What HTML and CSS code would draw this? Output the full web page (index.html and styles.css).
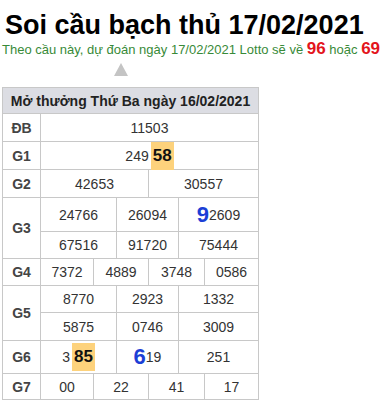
FILE: index.html
```html
<!DOCTYPE html>
<html lang="vi">
<head>
<meta charset="utf-8">
<link rel="stylesheet" href="styles.css">
</head>
<body>
<h1 class="title">Soi cầu bạch thủ 17/02/2021</h1>
<p class="subtitle">Theo cầu này, dự đoán ngày 17/02/2021 Lotto sẽ về <b class="red">96</b> hoặc <b class="red">69</b></p>
<div class="caret"></div>
<div class="results">
  <div class="head span-all">Mở thưởng Thứ Ba ngày 16/02/2021</div>

  <div class="lbl">ĐB</div>
  <div class="cell s2-8">11503</div>

  <div class="lbl">G1</div>
  <div class="cell s2-8">249<span class="hl">58</span></div>

  <div class="lbl">G2</div>
  <div class="cell s2-5">42653</div>
  <div class="cell s5-8">30557</div>

  <div class="lbl rs2">G3</div>
  <div class="cell s2-4">24766</div>
  <div class="cell s4-6">26094</div>
  <div class="cell s6-8"><span class="big">9</span>2609</div>
  <div class="cell s2-4">67516</div>
  <div class="cell s4-6">91720</div>
  <div class="cell s6-8">75444</div>

  <div class="lbl">G4</div>
  <div class="cell s2-3">7372</div>
  <div class="cell s3-5">4889</div>
  <div class="cell s5-7">3748</div>
  <div class="cell s7-8">0586</div>

  <div class="lbl rs2">G5</div>
  <div class="cell s2-4">8770</div>
  <div class="cell s4-6">2923</div>
  <div class="cell s6-8">1332</div>
  <div class="cell s2-4">5875</div>
  <div class="cell s4-6">0746</div>
  <div class="cell s6-8">3009</div>

  <div class="lbl">G6</div>
  <div class="cell s2-4">3<span class="hl">85</span></div>
  <div class="cell s4-6"><span class="big">6</span>19</div>
  <div class="cell s6-8">251</div>

  <div class="lbl">G7</div>
  <div class="cell s2-3">00</div>
  <div class="cell s3-5">22</div>
  <div class="cell s5-7">41</div>
  <div class="cell s7-8">17</div>
</div>
</body>
</html>
```
FILE: styles.css
```css
html, body {
  margin: 0;
  padding: 0;
  background: #fff;
}
body {
  padding: 0 2px;
  font-family: "Liberation Sans", Arial, sans-serif;
}
.title {
  margin: 0;
  padding: 10px 0 0 3px;
  font-size: 27px;
  line-height: 30px;
  font-weight: bold;
  color: #000;
}
.subtitle {
  margin: 0;
  font-size: 13px;
  line-height: 18px;
  color: #388a38;
  white-space: nowrap;
}
.red {
  color: #e3141c;
  font-size: 17px;
}
.caret {
  width: 0;
  height: 0;
  margin: 4px 0 11px 112px;
  border-left: 7px solid transparent;
  border-right: 7px solid transparent;
  border-bottom: 13px solid #c4c4c4;
}
.results {
  display: grid;
  width: 255px;
  grid-template-columns: 37px 52px 22px 31px 29px 25px 53px;
  grid-template-rows: 25px 27px 27px 27px 33px 26px 26px 26px 27px 32px 25px;
  gap: 1px;
  padding: 1px;
  background: #c8c8c8;
  font-size: 14px;
  color: #333;
}
.results > div {
  background: #fff;
  display: flex;
  align-items: center;
  justify-content: center;
}
.results > .head {
  background: #dcdde3;
  font-weight: bold;
  color: #222;
}
.span-all { grid-column: 1 / 8; }
.results > .lbl {
  grid-column: 1 / 2;
  font-weight: bold;
  color: #444;
}
.rs2 { grid-row: span 2; }
.s2-8 { grid-column: 2 / 8; }
.s2-5 { grid-column: 2 / 5; }
.s5-8 { grid-column: 5 / 8; }
.s2-4 { grid-column: 2 / 4; }
.s4-6 { grid-column: 4 / 6; }
.s6-8 { grid-column: 6 / 8; }
.s2-3 { grid-column: 2 / 3; }
.s3-5 { grid-column: 3 / 5; }
.s5-7 { grid-column: 5 / 7; }
.s7-8 { grid-column: 7 / 8; }
.hl {
  background: #fdd27c;
  font-weight: bold;
  font-size: 17px;
  color: #111;
  padding: 4px 2px;
  margin-left: 2px;
}
.big {
  color: #1c3fd6;
  font-weight: bold;
  font-size: 22px;
}
```
